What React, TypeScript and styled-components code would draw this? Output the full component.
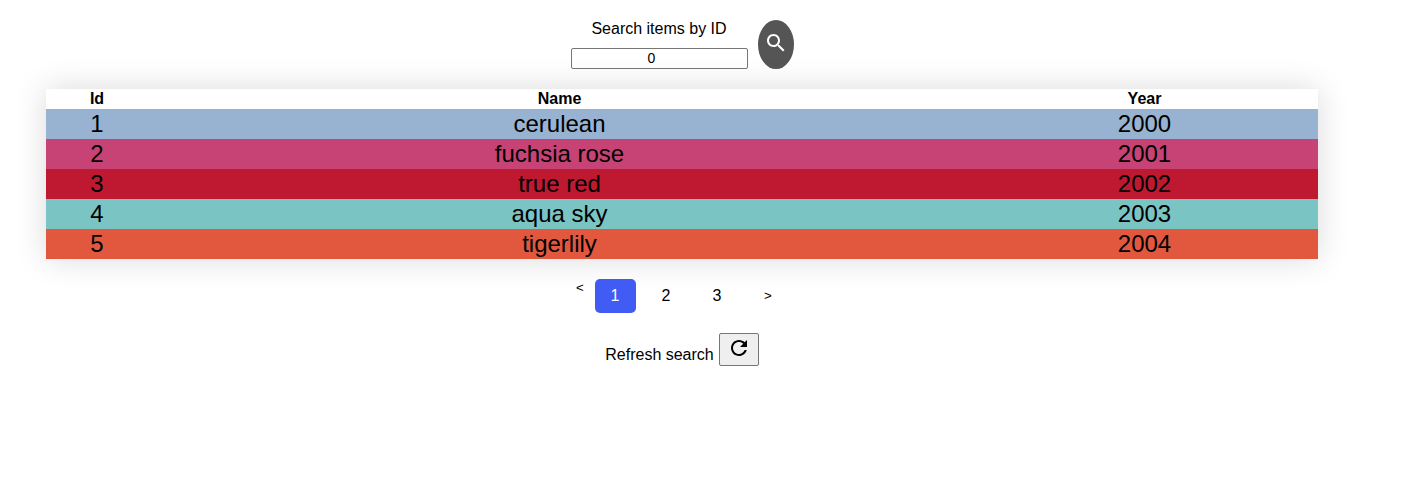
import React, { useState } from "react";
import styled, { createGlobalStyle } from "styled-components";

const GlobalStyle = createGlobalStyle`
  * { box-sizing: border-box; }
  body {
    margin: 0;
    background: #fff;
    color: #000;
    font-family: "Liberation Sans", Arial, sans-serif;
    font-size: 16px;
  }
`;

const Page = styled.main`
  width: 1364px;
  padding: 20px 46px 0;
  display: flex;
  flex-direction: column;
  align-items: center;
`;

const SearchBar = styled.form`
  display: flex;
  gap: 10px;
  height: 49px;
`;

const SearchField = styled.label`
  width: 177px;
  display: flex;
  flex-direction: column;
  justify-content: space-between;
  text-align: center;
  line-height: 18px;
`;

const SearchInput = styled.input`
  width: 177px;
  height: 21px;
  padding: 0 17px 2px 2px;
  border: 1px solid #767676;
  border-radius: 2px;
  background: #fff;
  color: #000;
  font: 14px "Liberation Sans", Arial, sans-serif;
  text-align: center;
`;

const SearchButton = styled.button`
  width: 36px;
  height: 49px;
  padding: 11px 6px 14px;
  border: 0;
  border-radius: 50%;
  background: #555;
  color: #fff;
`;

const Icon = styled.svg`
  display: block;
  width: 24px;
  height: 24px;
  fill: currentColor;
`;

const Table = styled.table`
  width: 1272px;
  margin-top: 20px;
  table-layout: fixed;
  border-collapse: collapse;
  text-align: center;
  box-shadow: 0 0 30px rgba(0, 0, 0, 0.15);
`;

const Column = styled.col<{ $width?: number }>`
  width: ${({ $width }) => ($width ? `${$width}px` : "auto")};
`;

const HeaderCell = styled.th`
  height: 20px;
  padding: 0;
  background: #fff;
  line-height: 20px;
`;

const ColorRow = styled.tr<{ $color: string }>`
  background: ${({ $color }) => $color};
`;

const Cell = styled.td`
  height: 30px;
  padding: 0;
  font-size: 24px;
  line-height: 30px;
`;

const Pagination = styled.nav`
  display: flex;
  gap: 10px;
  height: 34px;
  margin-top: 20px;
`;

const Previous = styled.button`
  width: 10px;
  height: 17px;
  padding: 0;
  border: 0;
  background: none;
  color: #000;
  font: 13.333px/17px "Liberation Sans", Arial, sans-serif;
`;

const PageButton = styled.button<{ $active?: boolean; $small?: boolean }>`
  width: 41px;
  height: 34px;
  padding: 0 1px 0 0;
  border: 0;
  border-radius: 5px;
  background: ${({ $active }) => ($active ? "#405cf5" : "transparent")};
  color: ${({ $active }) => ($active ? "#fff" : "#000")};
  font-family: inherit;
  font-size: ${({ $small }) => ($small ? "13.333px" : "16px")};
  line-height: 34px;
`;

const Refresh = styled.div`
  display: flex;
  gap: 5px;
  margin-top: 20px;
  line-height: 18px;
`;

const RefreshLabel = styled.span`
  padding-top: 13px;
`;

const RefreshButton = styled.button`
  width: 40px;
  height: 33px;
  padding: 2px 7px 6px;
  border: 1px solid #767676;
  border-radius: 2px;
  background: #efefef;
  color: #000;
`;

const items = [
  { id: 1, name: "cerulean", year: 2000, color: "#98b2d1" },
  { id: 2, name: "fuchsia rose", year: 2001, color: "#c74375" },
  { id: 3, name: "true red", year: 2002, color: "#bf1932" },
  { id: 4, name: "aqua sky", year: 2003, color: "#7bc4c4" },
  { id: 5, name: "tigerlily", year: 2004, color: "#e2583e" },
];

export default function App() {
  const [query, setQuery] = useState("0");
  const [page, setPage] = useState(1);

  return (
    <>
      <GlobalStyle />
      <Page>
        <SearchBar onSubmit={(e) => e.preventDefault()}>
          <SearchField>
            <span>Search items by ID</span>
            <SearchInput value={query} onChange={(e) => setQuery(e.target.value)} />
          </SearchField>
          <SearchButton aria-label="Search">
            <Icon viewBox="0 0 24 24">
              <path d="M15.5 14h-.79l-.28-.27C15.41 12.59 16 11.11 16 9.5 16 5.91 13.09 3 9.5 3S3 5.91 3 9.5 5.91 16 9.5 16c1.61 0 3.09-.59 4.23-1.57l.27.28v.79l5 4.99L20.49 19l-4.99-5zm-6 0C7.01 14 5 11.99 5 9.5S7.01 5 9.5 5 14 7.01 14 9.5 11.99 14 9.5 14z" />
            </Icon>
          </SearchButton>
        </SearchBar>
        <Table>
          <colgroup>
            <Column $width={102} />
            <Column />
            <Column $width={347} />
          </colgroup>
          <thead>
            <tr>
              <HeaderCell>Id</HeaderCell>
              <HeaderCell>Name</HeaderCell>
              <HeaderCell>Year</HeaderCell>
            </tr>
          </thead>
          <tbody>
            {items.map((item) => (
              <ColorRow key={item.id} $color={item.color}>
                <Cell>{item.id}</Cell>
                <Cell>{item.name}</Cell>
                <Cell>{item.year}</Cell>
              </ColorRow>
            ))}
          </tbody>
        </Table>
        <Pagination>
          <Previous onClick={() => setPage(Math.max(1, page - 1))}>&lt;</Previous>
          {[1, 2, 3].map((n) => (
            <PageButton key={n} $active={n === page} onClick={() => setPage(n)}>
              {n}
            </PageButton>
          ))}
          <PageButton $small onClick={() => setPage(Math.min(3, page + 1))}>
            &gt;
          </PageButton>
        </Pagination>
        <Refresh>
          <RefreshLabel>Refresh search</RefreshLabel>
          <RefreshButton aria-label="Refresh">
            <Icon viewBox="0 0 24 24">
              <path d="M17.65 6.35C16.2 4.9 14.21 4 12 4c-4.42 0-7.99 3.58-7.99 8s3.57 8 7.99 8c3.73 0 6.84-2.55 7.73-6h-2.08c-.82 2.33-3.04 4-5.65 4-3.31 0-6-2.69-6-6s2.69-6 6-6c1.66 0 3.14.69 4.22 1.78L13 11h7V4l-2.35 2.35z" />
            </Icon>
          </RefreshButton>
        </Refresh>
      </Page>
    </>
  );
}
